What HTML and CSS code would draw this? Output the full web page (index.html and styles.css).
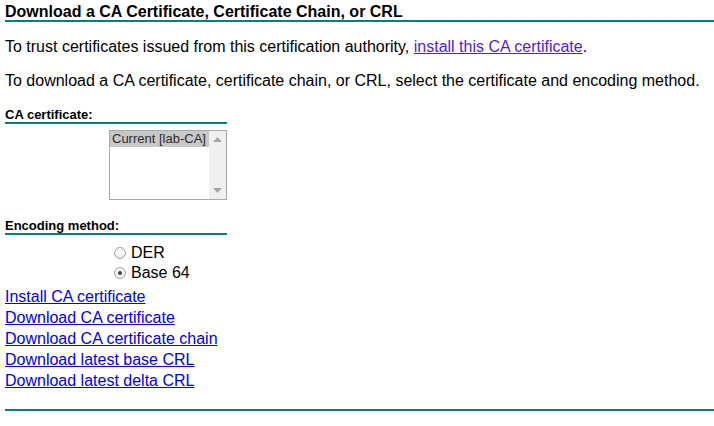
FILE: index.html
```html
<!DOCTYPE html>
<html>
<head>
<meta charset="utf-8">
<link rel="stylesheet" href="styles.css">
</head>
<body>
<div class="page">
  <h1 class="title">Download a CA Certificate, Certificate Chain, or CRL</h1>
  <p class="para first">To trust certificates issued from this certification authority, <a class="inline-link" href="#">install this CA certificate</a>.</p>
  <p class="para">To download a CA certificate, certificate chain, or CRL, select the certificate and encoding method.</p>

  <div class="label">CA certificate:</div>
  <div class="indent list-row">
    <div class="listbox">
      <div class="options">
        <div class="option selected">Current [lab-CA]</div>
      </div>
      <div class="scrollbar">
        <svg class="arrow" width="9" height="5" viewBox="0 0 9 5"><path d="M0 5 L4.5 0 L9 5 Z" fill="#a6a6a6"/></svg>
        <svg class="arrow" width="9" height="5" viewBox="0 0 9 5"><path d="M0 0 L4.5 5 L9 0 Z" fill="#a6a6a6"/></svg>
      </div>
    </div>
  </div>

  <div class="label label-enc">Encoding method:</div>
  <div class="indent radios">
    <label class="radio-row"><span class="radio"></span>DER</label>
    <label class="radio-row"><span class="radio checked"></span>Base 64</label>
  </div>

  <div class="links">
    <a href="#">Install CA certificate</a>
    <a href="#">Download CA certificate</a>
    <a href="#">Download CA certificate chain</a>
    <a href="#">Download latest base CRL</a>
    <a href="#">Download latest delta CRL</a>
  </div>

  <div class="bottom-rule"></div>
</div>
</body>
</html>
```

FILE: styles.css
```css
html, body {
  margin: 0;
  padding: 0;
  background: #ffffff;
}

body {
  font-family: "Liberation Sans", Arial, sans-serif;
  color: #000000;
}

.page {
  padding: 4px 0 0 5px;
}

.title {
  margin: 0;
  font-size: 16px;
  font-weight: bold;
  line-height: 16px;
  height: 16px;
  border-bottom: 2px solid #008080;
}

.para {
  margin: 0;
  font-size: 16px;
  line-height: 18px;
}

.para.first {
  margin-top: 16px;
}

.para + .para {
  margin-top: 16px;
}

.inline-link {
  color: #4f1ed8;
  text-decoration: underline;
}

.label {
  margin-top: 17px;
  width: 222px;
  font-size: 13px;
  font-weight: bold;
  line-height: 15px;
  border-bottom: 2px solid #008080;
}

.label-enc {
  margin-top: 18px;
}

.indent {
  padding-left: 104px;
}

.list-row {
  margin-top: 6px;
}

.listbox {
  display: flex;
  width: 116px;
  height: 68px;
  border: 1px solid #a9a9a9;
  background: #ffffff;
}

.options {
  flex: 1;
  display: flex;
  flex-direction: column;
}

.option {
  font-size: 13px;
  line-height: 16px;
  padding-left: 2px;
  color: #2b2b2b;
  white-space: nowrap;
}

.option.selected {
  background: #c8c8c8;
}

.scrollbar {
  width: 17px;
  background: #f0f0f0;
  display: flex;
  flex-direction: column;
  justify-content: space-between;
  align-items: center;
  padding: 6px 0 6px 0;
}

.arrow {
  display: block;
}

.radios {
  margin-top: 8px;
  padding-left: 109px;
  display: flex;
  flex-direction: column;
}

.radio-row {
  display: flex;
  align-items: center;
  font-size: 16px;
  line-height: 20px;
  height: 20px;
}

.radio {
  width: 12px;
  height: 12px;
  border-radius: 50%;
  box-sizing: border-box;
  border: 1px solid #a8a8a8;
  background: radial-gradient(circle at 50% 40%, #ffffff 0%, #eeeeee 60%, #d8d8d8 100%);
  margin-right: 5px;
  position: relative;
}

.radio.checked::after {
  content: "";
  position: absolute;
  left: 3px;
  top: 3px;
  width: 4px;
  height: 4px;
  border-radius: 50%;
  background: #444444;
}

.links {
  margin-top: 3px;
  display: flex;
  flex-direction: column;
  align-items: flex-start;
}

.links a {
  font-size: 16px;
  line-height: 21px;
  color: #0000ee;
  text-decoration: underline;
}

.bottom-rule {
  margin-top: 18px;
  height: 2px;
  background: #008080;
}
```
